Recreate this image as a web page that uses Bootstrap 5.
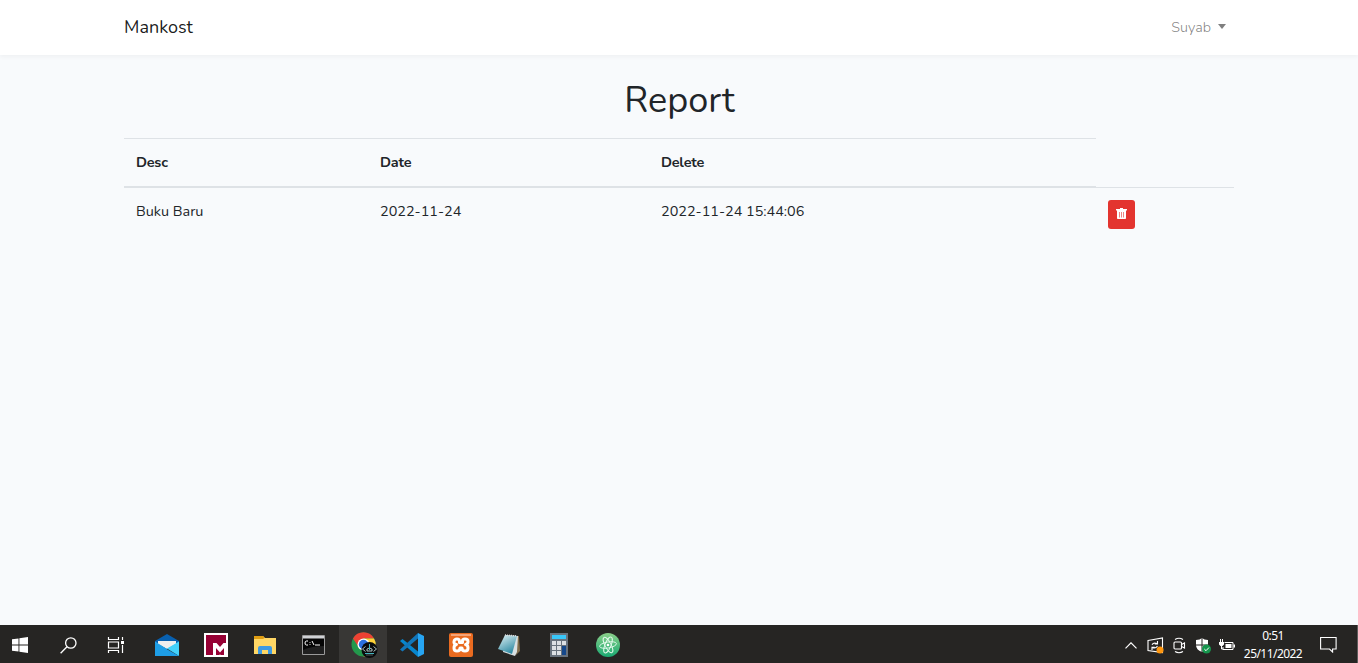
<!DOCTYPE html>
<html lang="en">
<head>
<meta charset="utf-8">
<meta name="viewport" content="width=device-width, initial-scale=1">
<title>Mankost</title>
<link href="https://cdn.jsdelivr.net/npm/bootstrap@5.3.0/dist/css/bootstrap.min.css" rel="stylesheet">
<style>
  body { font-family: Nunito, Lato, "Open Sans", sans-serif; font-size: 14.4px; line-height: 1.6; color: #212529; background: #f8fafc; height: 663px; overflow: hidden; }
  .page { width: 1110px; margin-left: 124px; }
  .topbar { height: 55px; background: #fff; box-shadow: 0 2px 4px rgba(0,0,0,.04); }
  .brand { font-size: 18px; color: rgba(0,0,0,.9); line-height: 1; padding-bottom: 2px; }
  .user { color: rgba(0,0,0,.5); padding-right: 8px; font-weight: 350; }
  .user::after { margin-left: 7px; vertical-align: 2.500px; border-top-width: 5px; border-left-width: 4.500px; border-right-width: 4.500px; }
  h1 { font-size: 36px; font-weight: 370; line-height: 43px; margin: 24px 0 16px; padding-left: 1px; }
  .report { width: 1110px; table-layout: fixed; border-collapse: collapse; }
  .report th, .report td { padding: 12px; vertical-align: top; border-top: 1px solid #dee2e6; }
  .report th { border-bottom: 2px solid #dee2e6; font-weight: 700; letter-spacing: -.2px; }
  .report td { font-weight: 380; }
  .trash { width: 27px; height: 29px; background: #e3342f; border-radius: 3px; padding: 0 0 2px; }
  .taskbar { height: 38px; background: #262523; border-right: 1px solid #5d5c5b; font-family: "Noto Sans", sans-serif; color: #fff; }
  .task { width: 48px; height: 38px; display: flex; align-items: center; justify-content: center; flex: none; padding-top: 2px; }
  .task svg { display: block; }
  .apps { gap: 1px; margin-left: 3px; }
  .current { background: #383735; }
  .tray { width: 24px; }
  .clock { font-size: 12px; line-height: 18px; letter-spacing: -.55px; width: 60px; text-align: center; padding-top: 2px; }
</style>
</head>
<body class="d-flex flex-column">
<nav class="topbar flex-shrink-0">
  <div class="page h-100 d-flex align-items-center justify-content-between">
    <a class="brand text-decoration-none" href="#"><span>Mankost</span></a>
    <a class="user dropdown-toggle text-decoration-none" href="#"><span>Suyab</span></a>
  </div>
</nav>
<main class="page flex-grow-1">
  <h1 class="text-center"><span>Report</span></h1>
  <table class="report">
    <colgroup><col style="width:244px"><col style="width:281px"><col style="width:447px"><col style="width:138px"></colgroup>
    <thead><tr><th><span>Desc</span></th><th><span>Date</span></th><th><span>Delete</span></th></tr></thead>
    <tbody><tr>
      <td><span>Buku Baru</span></td><td><span>2022-11-24</span></td><td><span>2022-11-24 15:44:06</span></td>
      <td><button class="trash btn d-flex align-items-center justify-content-center" aria-label="Delete">
        <svg width="11" height="13" viewBox="0 0 11 13"><path d="M4 1h3v1h4v1.400H0V2h4z" fill="#fff"/><path d="M1 3h9v8.200q0 .8-.8.8H1.800q-.8 0-.8-.8z" fill="#fff"/><path d="M3.500 5v5.500M5.500 5v5.500M7.500 5v5.500" stroke="#e3342f" stroke-width=".6"/></svg>
      </button></td>
    </tr></tbody>
  </table>
</main>
<footer class="taskbar d-flex align-items-center flex-shrink-0">
  <div class="d-flex" style="margin-left:-4px">
    <div class="task"><svg width="16" height="16" viewBox="0 0 16 16" fill="#fff"><path d="M0 2.300 6.500 1.400v6.100H0zM7.400 1.200 16 0v7.500H7.400zM0 8.400h6.500v6.200L0 13.700zM7.400 8.400H16V16l-8.600-1.200z"/></svg></div>
    <div class="task"><svg width="17" height="17" viewBox="0 0 17 17" fill="none" stroke="#fff" stroke-width="1.300"><circle cx="10.800" cy="6" r="5.200"/><path d="M7 9.700.6 16.300"/></svg></div>
    <div class="task"><svg width="18" height="16" viewBox="0 0 18 16" fill="none" stroke="#fff" stroke-width="1.200"><path d="M1.500 0v2.500h10V0M1.500 16v-2.500h10V16M1.500 5h10v6h-10zM15.500 0v3M15.500 8v8"/><path d="M14 4h3v3h-3z" fill="#fff" stroke="none"/></svg></div>
  </div>
  <div class="apps d-flex">
    <div class="task"><svg width="24" height="24" viewBox="0 0 24 24"><path d="M0 8 12 1l12 7v4H0z" fill="#0860af"/><path d="M3 8h18v3l-9 5-9-5z" fill="#eee"/><path d="M0 8.500 12 16 0 23z" fill="#27a9ee"/><path d="M12 15.500 24 8.500V23z" fill="#43d1fa"/><path d="M0 23V9.500L24 23z" fill="#1e9ee6"/></svg></div>
    <div class="task"><svg width="24" height="24" viewBox="0 0 24 24"><path fill="#fff" d="M0 0h24v24H0z"/><path fill="#960034" d="M2 2h20v8h-2.500L16 14l-3.500-4H9v12H2z"/><path fill="#960034" d="M12 15l4 4.500 4-4.500v7h-3.500l-.5-1-.5 1H12z"/></svg></div>
    <div class="task"><svg width="22" height="20" viewBox="0 0 22 20"><path d="M0 1h9l2 2h11v16H0z" fill="#ffd765"/><path d="M0 1h9l1.500 2L9 4H0z" fill="#df9d12"/><path d="M4 19v-6q0-2 2-2h10q2 0 2 2v6h-4v-4H8v4z" fill="#3e9ae2"/></svg></div>
    <div class="task"><svg style="margin-left:-2px" width="23" height="20" viewBox="0 0 23 20"><path d="M.5.500h22v19H.5z" fill="#050505" stroke="#9a9a9a"/><path d="M1 1h21v2.500H1z" fill="#d0d2d5"/><path d="M6 6H4.500Q3 6 3 8t1.500 2H6M8 7v.8M8 9v.8M10 6l2 4M13 10h5" fill="none" stroke="#fff"/><path d="M1 19h21v-8q-12 0-21 4z" fill="#202020"/></svg></div>
    <div class="task current"><svg style="margin-left:2px" width="27" height="26" viewBox="0 0 27 26"><circle cx="12.500" cy="12.500" r="12" fill="#23984c"/><path d="M2 6.500A12 12 0 0 1 23 6.500H12.500L7.500 15z" fill="#ed4133"/><path d="M12.500 6.500H23a12 12 0 0 1-10.500 18L18 15z" fill="#ffd138"/><circle cx="12.500" cy="12.500" r="6" fill="#fff"/><circle cx="12.500" cy="12.500" r="4.700" fill="#2b70e0"/><circle cx="18.500" cy="18" r="8" fill="#0a0c0d"/><path d="m14.500 14.500-3 2.500 3 2.500M22.500 14.500l3 2.500-3 2.500M16 19v-2q2.500-2 5 0v2z" stroke="#bdd0d2" stroke-width=".9" fill="none"/><path d="M18.500 12v6M14 21.500h9" stroke="#43b4bd"/><path d="M15 23h7" stroke="#717b7b" stroke-width=".7"/></svg></div>
    <div class="task"><svg width="24" height="24" viewBox="0 0 24 24"><path d="M2.500 6 18 18.500V24L0 8z" fill="#0786ce"/><path d="M2.500 18.500 18 5.500V0L0 16.500z" fill="#1276b9"/><path d="m18 0 6 3v18l-6 3z" fill="#27a5f2"/></svg></div>
    <div class="task"><svg width="24" height="24" viewBox="0 0 24 24"><rect width="24" height="24" rx="2" fill="#ea6b20"/><path d="M2 1h20v2H2z" fill="#f6a477"/><path d="M10.500 9.500V8.300Q10.500 6 8 6T5 8.500t2.500 3Q5 12 5 15t3 3 3-3h2q0 3 3 3t3-3-2.500-3.500Q19 11 19 8.500T16 6t-2.500 2.300v1.200z" fill="none" stroke="#fff" stroke-width="3" stroke-linejoin="round"/></svg></div>
    <div class="task"><svg style="margin-left:-2px" width="24" height="24" viewBox="0 0 24 24"><defs><linearGradient id="note" x1="0" y1="0" x2=".5" y2="1"><stop stop-color="#e3f4f6"/><stop offset="1" stop-color="#348da5"/></linearGradient></defs><path d="M20 3h2l1 15-4 4z" fill="#806d4b"/><path d="m8 2 13 1-1 16-2 4-12-4z" fill="#d9e0e2"/><path d="m8 2 12 1-5 18-14-5z" fill="url(#note)"/><path d="m8 2 12 1" stroke="#ddd" stroke-dasharray="1 1" stroke-width="1.500"/></svg></div>
    <div class="task"><svg width="18" height="24" viewBox="0 0 18 24"><path fill="#68727d" d="M0 0h18v24H0z"/><path d="M2 2h14v4H2z" fill="#38c7fa"/><path d="M2 8h4v4H2zM7 8h4v4H7zM12 8h4v4h-4zM2 13h4v4H2zM7 13h4v4H7zM2 18h4v4H2zM7 18h4v4H7z" fill="#dce0e4"/><path d="M12 13h4v9h-4z" fill="#15488b"/></svg></div>
    <div class="task"><svg width="24" height="24" viewBox="0 0 24 24"><defs><linearGradient id="atom" x2="0" y2="1"><stop stop-color="#8bcf8a"/><stop offset="1" stop-color="#19aa72"/></linearGradient></defs><circle cx="12" cy="12" r="12" fill="url(#atom)"/><g fill="none" stroke="#e4faed" stroke-width=".9"><ellipse cx="12" cy="12" rx="3" ry="8.500" transform="rotate(-28 12 12)"/><ellipse cx="12" cy="12" rx="3" ry="8.500" transform="rotate(22 12 12)"/><ellipse cx="12" cy="12" rx="3" ry="8.500" transform="rotate(80 12 12)"/></g><circle cx="12" cy="12" r="1.300" fill="#fff"/></svg></div>
  </div>
  <div class="d-flex align-items-center ms-auto">
    <div class="task tray"><svg width="12" height="7" viewBox="0 0 12 7"><path d="m.5 6.300 5.500-5.500 5.500 5.500" fill="none" stroke="#fff" stroke-width="1.200"/></svg></div>
    <div class="task tray"><svg width="17" height="17" viewBox="0 0 17 17"><path d="M1 3.500 15.500 1v14.500L1 13.500z" fill="none" stroke="#fff" stroke-width="1.100"/><path d="M5 7.800Q6.500 5 10 6.500M10.500 4v3H7.800M10.500 9Q8.500 12 5.500 10.500M5 13v-2.800h2.700" fill="none" stroke="#fff" stroke-width="1.100"/><circle cx="13" cy="13" r="3.500" fill="#ff970f"/></svg></div>
    <div class="task tray"><svg width="13" height="17" viewBox="0 0 13 17" fill="none" stroke="#fff" stroke-width="1.100"><path d="M2 2.500Q6 0 10 2.500M2 14.500Q6 17 10 14.500"/><rect x="1" y="5" width="7.500" height="7" rx="1"/><path d="m8.500 7.500 3-1.500v5l-3-1.500z"/></svg></div>
    <div class="task tray"><svg width="16" height="17" viewBox="0 0 16 17"><path d="M1 3q4 0 6-2 2 2 6 2v5q0 5-6 7-6-2-6-7z" fill="#fff"/><path d="M7 1v14M1 8h12" stroke="#262523"/><circle cx="11.500" cy="12" r="4.500" fill="#16964d"/><path d="m9.300 12 1.700 1.700 3-3.200" fill="none" stroke="#fff"/></svg></div>
    <div class="task tray"><svg width="16" height="13" viewBox="0 0 16 13"><path d="M5.500 3.500h8.500v7H4V8" fill="none" stroke="#fff"/><path d="M6.500 5h6v4h-6zM14.500 5.500H16v3h-1.500zM0 3h5v2.500L3.500 7H1.500L0 5.500z" fill="#fff"/><path d="M1.500 0v3M3.500 0v3M2.500 6v4H4" fill="none" stroke="#fff"/></svg></div>
    <div class="clock ms-1" style="margin-right:17px"><div><span>0:51</span></div><div><span>25/11/2022</span></div></div>
    <div style="width:17px;margin-right:20px"><svg class="d-block" width="17" height="17" viewBox="0 0 17 17"><path d="M.6 1.500h15.500v11.500h-3.500v3L9.500 13H.6z" fill="none" stroke="#fff" stroke-width="1.100"/></svg></div>
  </div>
</footer>
<script src="https://cdn.jsdelivr.net/npm/bootstrap@5.3.0/dist/js/bootstrap.bundle.min.js"></script>
</body>
</html>
